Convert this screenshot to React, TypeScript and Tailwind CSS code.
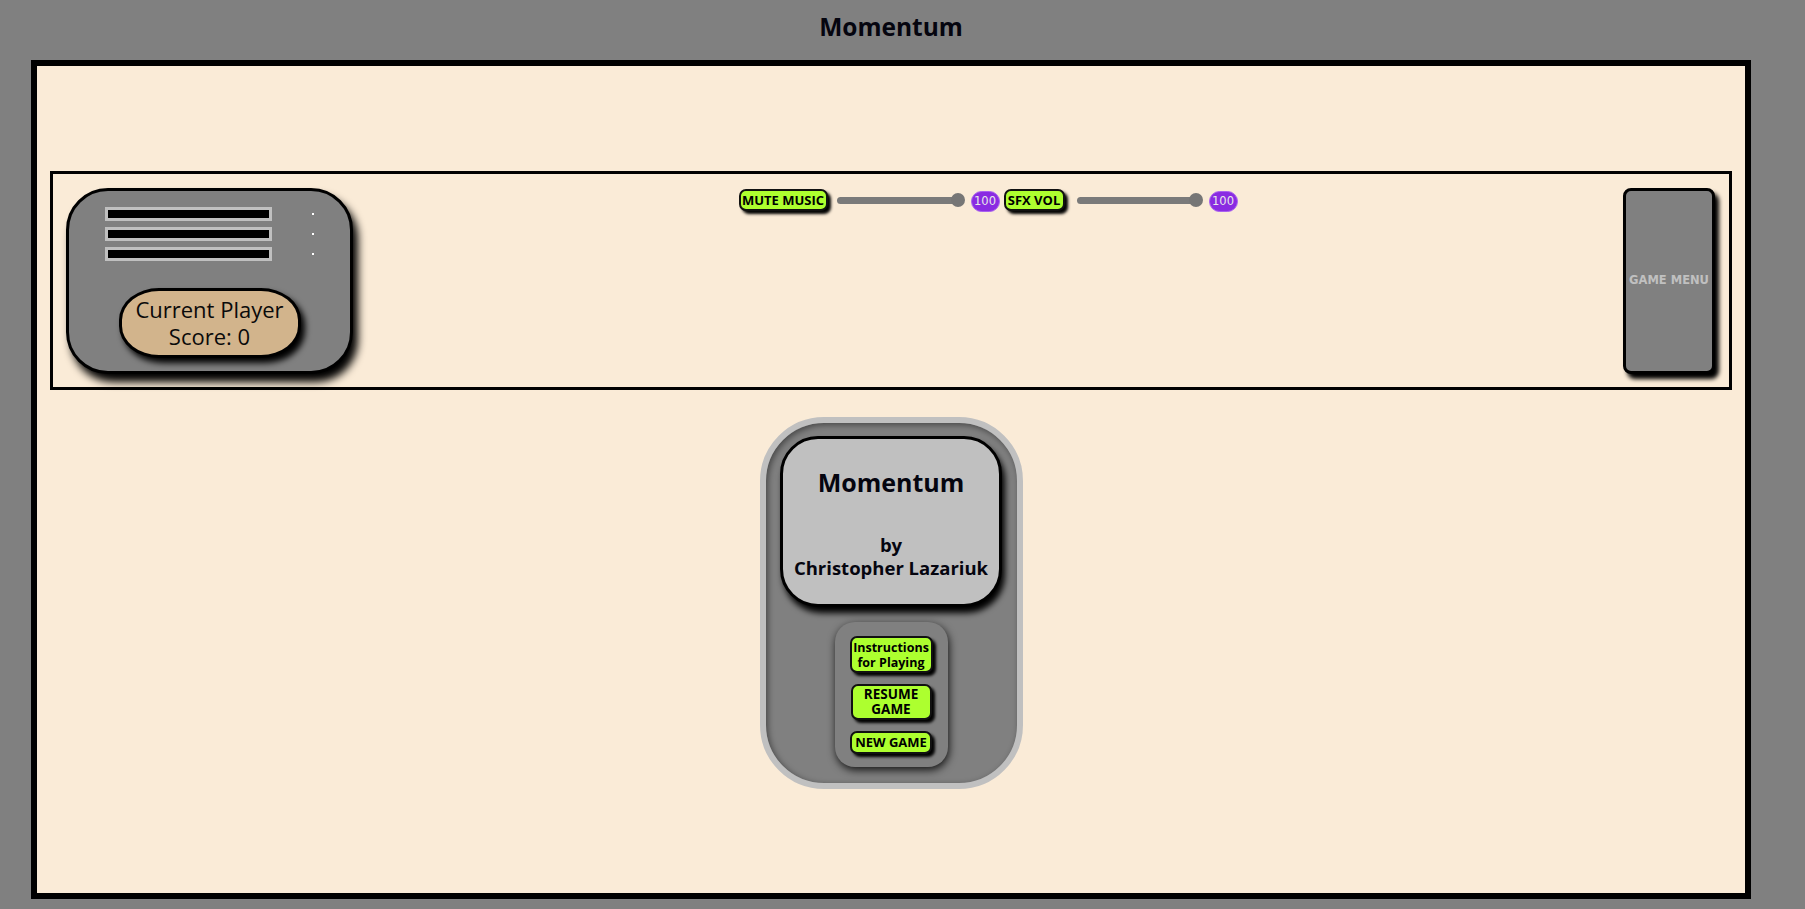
import React from "react";

function GreenButton({
  children,
  className = "",
}: {
  children: React.ReactNode;
  className?: string;
}) {
  return (
    <div
      className={
        "flex items-center justify-center rounded-[7px] border-2 border-[#111] bg-[#adff2f] text-center font-bold text-black shadow-[3px_3px_3px_#000] " +
        className
      }
    >
      {children}
    </div>
  );
}

function Slider({ width }: { width: number }) {
  return (
    <div className="relative flex h-[14px] items-center" style={{ width }}>
      <div className="h-[7px] w-full rounded-full bg-[#7a7a7a]" />
      <div className="absolute right-[-1px] top-0 h-[14px] w-[14px] rounded-full bg-[#767676]" />
    </div>
  );
}

function Badge() {
  return (
    <div className="flex h-[21px] w-[29px] items-center justify-center rounded-full border border-[#a860f0] bg-[#8a2be2] font-['DejaVu_Sans',sans-serif] text-[11.5px] text-[#e8e8e8]">
      100
    </div>
  );
}

function Bar() {
  return (
    <div className="flex items-center">
      <div className="h-[14px] w-[167px] border-[3px] border-[#c0c0c0] bg-black" />
      <div className="ml-[40px] h-[2px] w-[2px] bg-white" />
    </div>
  );
}

export default function App() {
  return (
    <div className="min-h-screen bg-[#808080] font-['Open_Sans',sans-serif] text-black">
      <div className="w-[1782px]">
        <div className="h-[60px] pt-[12px] text-center">
          <h1 className="text-[24.5px] font-bold leading-[30px] text-[#05050f]">Momentum</h1>
        </div>

        <div className="ml-[31px] h-[839px] w-[1720px] border-[6px] border-black bg-[#faebd7]">
          {/* header panel */}
          <div className="mx-[13px] mt-[105px] flex h-[219px] items-start border-[3px] border-black pl-[13px] pr-[14px] pt-[14px]">
            {/* player card */}
            <div className="flex h-[186px] w-[287px] shrink-0 flex-col items-center rounded-[42px] border-[3px] border-black bg-[#808080] pt-[16px] shadow-[5px_8px_8px_#000]">
              <div className="flex flex-col gap-[6px]">
                <Bar />
                <Bar />
                <Bar />
              </div>
              <div className="mt-[27px] flex h-[70px] w-[182px] flex-col items-center justify-center rounded-[40px/32px] border-[3px] border-black bg-[#d2b48c] text-[22px] leading-[27px] text-[#0a0a0a] shadow-[4px_5px_6px_#000]">
                <div>Current Player</div>
                <div>Score: 0</div>
              </div>
            </div>

            {/* sound controls */}
            <div className="flex flex-1 justify-center pt-[1px]">
              <div className="flex h-[22px] items-center">
                <GreenButton className="h-[22px] w-[89px] text-[13px] leading-none">MUTE MUSIC</GreenButton>
                <div className="ml-[9px]">
                  <Slider width={127} />
                </div>
                <div className="ml-[7px] mt-[3px]">
                  <Badge />
                </div>
                <GreenButton className="ml-[4px] h-[22px] w-[61px] text-[13px] leading-none">SFX VOL</GreenButton>
                <div className="ml-[12px]">
                  <Slider width={125} />
                </div>
                <div className="ml-[7px] mt-[3px]">
                  <Badge />
                </div>
              </div>
            </div>

            {/* game menu */}
            <div className="flex h-[186px] w-[92px] shrink-0 items-center justify-center rounded-[8px] border-[3px] border-black bg-[#808080] shadow-[4px_5px_4px_#000]">
              <span className="font-['DejaVu_Sans',sans-serif] text-[11.5px] font-bold text-[#c0c0c0]">GAME MENU</span>
            </div>
          </div>

          {/* center dialog */}
          <div className="mx-auto mt-[27px] flex h-[372px] w-[263px] flex-col items-center rounded-[64px] border-[6px] border-[#c0c0c0] bg-[#808080] pt-[13px] shadow-[inset_2px_2px_6px_rgba(0,0,0,0.45)]">
            <div className="flex h-[171px] w-[222px] flex-col items-center rounded-[38px] border-[3px] border-black bg-[#c0c0c0] pt-[28px] text-center text-[#05050f] shadow-[3px_6px_6px_#000]">
              <div className="text-[25px] font-bold leading-[30px]">Momentum</div>
              <div className="mt-[36px] text-[18.5px] font-bold leading-[23px]">by</div>
              <div className="text-[18.5px] font-bold leading-[23px]">Christopher Lazariuk</div>
            </div>

            <div className="mt-[15px] flex h-[145px] w-[113px] flex-col items-center rounded-[20px] bg-[#808080] pt-[14px] shadow-[1px_3px_8px_rgba(0,0,0,0.85)]">
              <GreenButton className="h-[37px] w-[83px] text-[12.5px] leading-[15px]">
                Instructions
                <br />
                for Playing
              </GreenButton>
              <GreenButton className="mt-[11px] h-[36px] w-[81px] text-[13.5px] leading-[15px]">
                RESUME
                <br />
                GAME
              </GreenButton>
              <GreenButton className="mt-[11px] h-[23px] w-[82px] text-[13px] leading-[15px]">NEW GAME</GreenButton>
            </div>
          </div>
        </div>
      </div>
    </div>
  );
}
